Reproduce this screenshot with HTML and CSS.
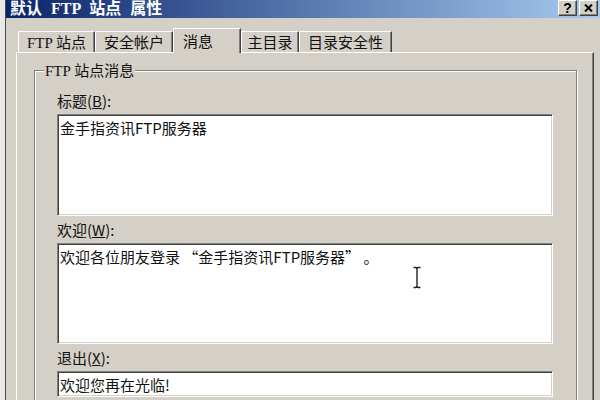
FILE: index.html
```html
<!DOCTYPE html>
<html lang="zh-CN">
<head>
<meta charset="utf-8">
<title>默认 FTP 站点 属性</title>
<link rel="stylesheet" href="styles.css">
</head>
<body>
<div class="screen">
  <div class="frame-left"></div>
  <div class="window">
    <div class="titlebar">
      <span class="title">默认 FTP 站点 属性</span>
      <div class="caption-btns">
        <span class="cbtn help">?</span>
        <span class="cbtn close"><svg width="9" height="8" viewBox="0 0 9 8"><path d="M1 0.5 L8 7.5 M8 0.5 L1 7.5" stroke="#000" stroke-width="2" fill="none"/></svg></span>
      </div>
    </div>
    <div class="body">
      <div class="tabs">
        <div class="tab t1"><span class="lat">FTP</span> 站点</div>
        <div class="tab t2">安全帐户</div>
        <div class="tab sel">消息</div>
        <div class="tab t4">主目录</div>
        <div class="tab t5">目录安全性</div>
      </div>
      <div class="panel">
        <fieldset class="group">
          <legend><span class="lat">FTP</span> 站点消息</legend>
          <div class="group-body">
            <div class="field">
              <div class="label">标题(<u>B</u>):</div>
              <div class="textbox box-title">金手指资讯FTP服务器</div>
            </div>
            <div class="field">
              <div class="label">欢迎(<u>W</u>):</div>
              <div class="textbox box-welcome">欢迎各位朋友登录 “金手指资讯FTP服务器” 。</div>
            </div>
            <div class="field">
              <div class="label">退出(<u>X</u>):</div>
              <div class="textbox box-exit">欢迎您再在光临!</div>
            </div>
          </div>
        </fieldset>
      </div>
    </div>
  </div>
  <svg class="ibeam" width="10" height="23" viewBox="0 0 10 23"><path d="M1.5 1.5 H3.5 Q5 1.5 5 3 Q5 1.5 6.5 1.5 H8.5 M5 3 V20 M1.5 21.5 H3.5 Q5 21.5 5 20 Q5 21.5 6.5 21.5 H8.5" stroke="#222" stroke-width="1.4" fill="none"/></svg>
</div>
</body>
</html>
```

FILE: styles.css
```css
* { box-sizing: border-box; }
html, body { margin: 0; padding: 0; }
body {
  width: 600px;
  height: 400px;
  overflow: hidden;
  background: #d4d0c8;
  font-family: "Noto Sans CJK SC", sans-serif;
  font-size: 15px;
  color: #111;
}
.screen {
  position: relative;
  width: 600px;
  height: 400px;
  display: flex;
  overflow: hidden;
}
.frame-left {
  width: 6px;
  flex: none;
  background: #e9e8e4;
  border-right: 1px solid #4a4a4a;
}
.window {
  flex: 1;
  min-width: 0;
  display: flex;
  flex-direction: column;
  background: #d4d0c8;
}
.titlebar {
  height: 18px;
  flex: none;
  display: flex;
  align-items: flex-start;
  justify-content: space-between;
  background: linear-gradient(to right, #0a246a, #a6caf0);
  padding: 0 2px 0 4px;
}
.title {
  color: #fff;
  font-family: "Liberation Serif", "Noto Sans CJK SC", serif;
  font-weight: bold;
  font-size: 16px;
  line-height: 18px;
  word-spacing: 5px;
  white-space: nowrap;
}
.lat { font-family: "Liberation Serif", "Noto Sans CJK SC", serif; }
.caption-btns { display: flex; gap: 2px; }
.cbtn {
  width: 19px;
  height: 16px;
  background: #d4d0c8;
  border: 1px solid;
  border-color: #fff #404040 #404040 #fff;
  box-shadow: inset -1px -1px 0 #808080;
  display: flex;
  align-items: center;
  justify-content: center;
  font: bold 14px/1 "Liberation Sans", sans-serif;
  color: #000;
}
.body {
  flex: 1;
  min-height: 0;
  display: flex;
  flex-direction: column;
  padding: 10px 6px 0 10px;
}
.tabs {
  height: 24px;
  flex: none;
  display: flex;
  align-items: flex-end;
  padding-left: 2px;
}
.tab {
  height: 21px;
  border-top: 1px solid #fff;
  border-left: 1px solid #fff;
  border-right: 1px solid #404040;
  box-shadow: inset -1px 0 0 #808080;
  text-align: center;
  line-height: 20px;
  white-space: nowrap;
}
.t1 { width: 77px; }
.t2 { width: 78px; }
.t4 { width: 58px; }
.t5 { width: 93px; }
.tab.sel {
  position: relative;
  z-index: 1;
  width: 68px;
  height: 25px;
  margin-bottom: -1px;
  padding: 2px 0 0 9px;
  text-align: left;
  background: #d4d0c8;
}
.panel {
  flex: 1;
  min-height: 0;
  border-top: 1px solid #fff;
  border-left: 1px solid #fff;
  border-right: 1px solid #404040;
  box-shadow: inset -1px 0 0 #808080;
  padding: 9px 16px 0 17px;
}
.group {
  margin: 0;
  min-width: 0;
  padding: 0 0 0 9px;
  border: 1px solid #808080;
  box-shadow: inset 1px 1px 0 #fff, 1px 1px 0 #fff;
}
.group legend {
  padding: 0 1px;
  line-height: 16px;
  background: #d4d0c8;
  white-space: nowrap;
}
.group-body {
  padding: 14px 23px 20px 13px;
}
.field + .field { margin-top: 6px; }
.label {
  line-height: 16px;
  margin-bottom: 5px;
  white-space: nowrap;
}
.textbox {
  background: #fff;
  border: 1px solid;
  border-color: #808080 #fff #fff #808080;
  box-shadow: inset 1px 1px 0 #404040, inset -1px -1px 0 #d4d0c8;
  padding: 5px 2px 0 2px;
  line-height: 16px;
  white-space: nowrap;
  overflow: hidden;
}
.box-title { height: 102px; }
.box-welcome { height: 101px; }
.box-exit { height: 26px; }
.ibeam {
  position: absolute;
  left: 412px;
  top: 266px;
}
```
